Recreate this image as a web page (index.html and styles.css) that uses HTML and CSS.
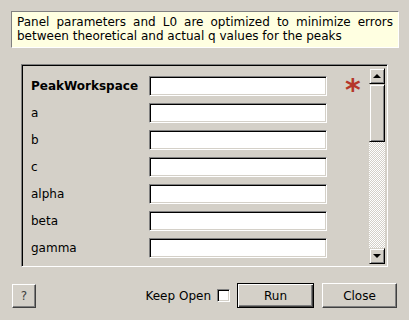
FILE: index.html
```
<!DOCTYPE html>
<html lang="en">
<head>
  <meta charset="utf-8">
  <title>Optimize Crystal Placement</title>
  <link rel="stylesheet" href="styles.css">
</head>
<body>
  <div class="dialog">
    <div class="banner">Panel parameters and L0 are optimized to minimize errors between theoretical and actual q values for the peaks</div>

    <div class="frame">
      <div class="rows">
        <div class="row">
          <span class="label bold">PeakWorkspace</span>
          <span class="field"></span>
          <span class="star">*</span>
        </div>
        <div class="row"><span class="label">a</span><span class="field"></span></div>
        <div class="row"><span class="label">b</span><span class="field"></span></div>
        <div class="row"><span class="label">c</span><span class="field"></span></div>
        <div class="row"><span class="label">alpha</span><span class="field"></span></div>
        <div class="row"><span class="label">beta</span><span class="field"></span></div>
        <div class="row"><span class="label">gamma</span><span class="field"></span></div>
      </div>
      <div class="scrollbar">
        <div class="sb-btn"><span class="arrow up"></span></div>
        <div class="sb-thumb"></div>
        <div class="sb-track"></div>
        <div class="sb-btn"><span class="arrow down"></span></div>
      </div>
    </div>

    <div class="footer">
      <button class="btn help">?</button>
      <span class="spacer"></span>
      <span class="keep">Keep Open</span>
      <span class="check"></span>
      <button class="btn run">Run</button>
      <button class="btn close">Close</button>
    </div>
  </div>
</body>
</html>
```

FILE: styles.css
```
body {
    margin: 0;
    background-color: #d4d0c8;
    font-family: "DejaVu Sans", sans-serif;
    font-size: 12px;
    color: #000;
}

.dialog {
    width: 409px;
    height: 320px;
    padding-top: 11px;
    box-sizing: border-box;
}

.banner {
    margin-left: 11px;
    width: 388px;
    height: 37px;
    box-sizing: border-box;
    padding: 3px 5px 0 5px;
    background-color: #ffffe1;
    border: 1px solid;
    border-color: #808080 #ffffff #ffffff #808080;
    line-height: 14px;
    font-size: 12px;
    text-align: justify;
}

.frame {
    margin: 16px 0 0 21px;
    width: 367px;
    height: 203px;
    box-sizing: border-box;
    border: 1px solid;
    border-color: #808080 #ffffff #ffffff #808080;
    box-shadow: inset 1px 1px 0 #000, inset -1px -1px 0 #d4d0c8;
    display: flex;
    padding: 2px 2px 2px 2px;
}

.rows {
    flex: 1;
    padding: 9px 0 0 7px;
    overflow: hidden;
}

.row {
    display: flex;
    align-items: center;
    height: 20px;
    margin-bottom: 7px;
}

.label {
    width: 118px;
}

.bold {
    font-weight: bold;
}

.field {
    width: 178px;
    height: 20px;
    box-sizing: border-box;
    background-color: #fff;
    border: 1px solid;
    border-color: #808080 #ffffff #ffffff #808080;
    box-shadow: inset 1px 1px 0 #000, inset -1px -1px 0 #d4d0c8;
}

.star {
    margin-left: 18px;
    color: #b5362a;
    font-size: 30px;
    font-weight: bold;
    line-height: 20px;
    height: 20px;
    padding-top: 8px;
}

.scrollbar {
    width: 16px;
    margin-top: 1px;
    display: flex;
    flex-direction: column;
}

.sb-btn,
.sb-thumb {
    box-sizing: border-box;
    background-color: #d4d0c8;
    border: 1px solid;
    border-color: #d4d0c8 #000 #000 #d4d0c8;
    box-shadow: inset 1px 1px 0 #fff, inset -1px -1px 0 #808080;
}

.sb-btn {
    height: 16px;
    display: flex;
    align-items: center;
    justify-content: center;
}

.sb-thumb {
    height: 58px;
}

.sb-track {
    flex: 1;
    background: repeating-conic-gradient(#ffffff 0 25%, #d4d0c8 0 50%) 0 0 / 2px 2px;
}

.arrow {
    width: 0;
    height: 0;
    border-left: 4px solid transparent;
    border-right: 4px solid transparent;
}

.arrow.up {
    border-bottom: 4px solid #000;
}

.arrow.down {
    border-top: 4px solid #000;
}

.footer {
    display: flex;
    align-items: center;
    margin: 16px 0 0 12px;
    width: 385px;
    height: 25px;
}

.spacer {
    flex: 1;
}

.btn {
    font-family: "DejaVu Sans", sans-serif;
    font-size: 12px;
    color: #000;
    height: 25px;
    padding: 0;
    background-color: #d4d0c8;
    border: 1px solid;
    border-color: #fff #404040 #404040 #fff;
    box-shadow: inset -1px -1px 0 #808080;
}

.help {
    width: 24px;
    height: 24px;
    color: #404040;
}

.run {
    width: 77px;
    margin-right: 8px;
    border: 1px solid #000;
    box-shadow: inset 1px 1px 0 #fff, inset -1px -1px 0 #404040, inset -2px -2px 0 #808080;
}

.close {
    width: 75px;
}

.keep {
    margin-right: 6px;
}

.check {
    width: 13px;
    height: 13px;
    box-sizing: border-box;
    background-color: #fff;
    border: 1px solid;
    border-color: #808080 #fff #fff #808080;
    box-shadow: inset 1px 1px 0 #000, inset -1px -1px 0 #d4d0c8;
    margin-right: 7px;
}
```
